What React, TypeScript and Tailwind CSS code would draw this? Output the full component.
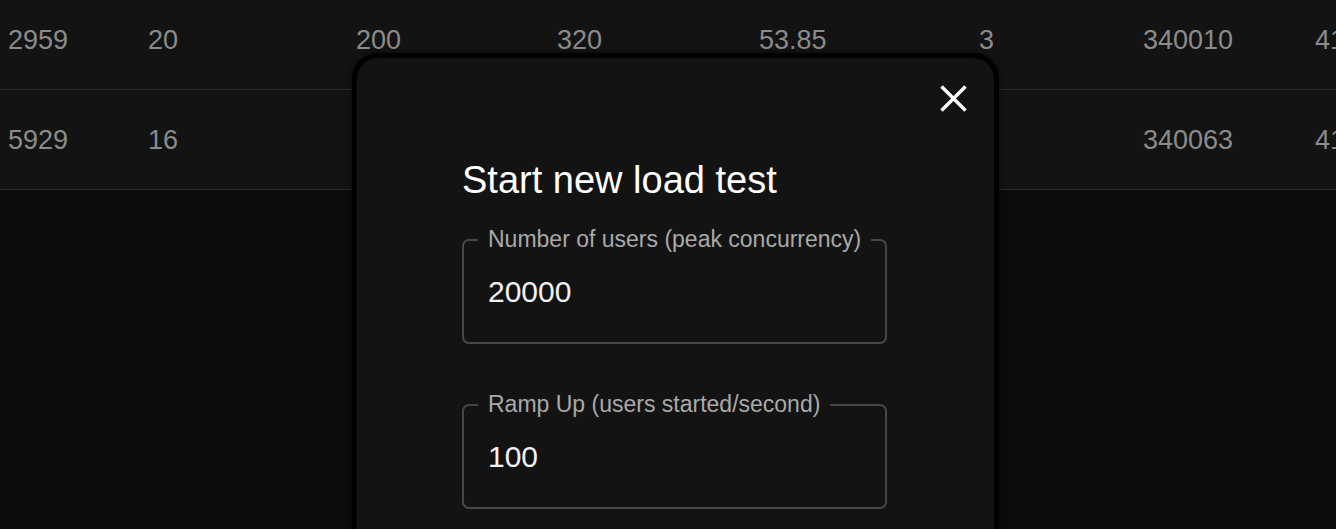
import React from "react";

type Row = string[];

const rows: Row[] = [
  ["2959", "20", "200", "320", "53.85", "3", "340010", "4120"],
  ["5929", "16", "160", "288", "55.56", "2", "340063", "4127"],
];

const CloseIcon: React.FC = () => (
  <svg width="27" height="27" viewBox="0 0 27 27" fill="none" aria-hidden>
    <path d="M1.5 1.5 25.5 25.5M25.5 1.5 1.5 25.5" stroke="white" strokeWidth="3.4" />
  </svg>
);

type FieldProps = {
  label: string;
  value: string;
};

const Field: React.FC<FieldProps> = ({ label, value }) => (
  <fieldset className="rounded-[7px] border-2 border-[#474747] pl-[14px] pr-[4px] pt-[26px] pb-[35px]">
    <legend className="whitespace-nowrap px-2.5 text-[23px] leading-[23px] text-[#a9a9a9]">{label}</legend>
    <div className="pl-2.5 text-[30px] leading-[30px] text-[#f2f2f2]">{value}</div>
  </fieldset>
);

export default function App() {
  return (
    <div
      className="relative h-[529px] w-full overflow-hidden bg-[#0c0c0c]"
      style={{ fontFamily: '"Liberation Sans", Arial, sans-serif' }}
    >
      <div className="-mt-[10px]">
        {rows.map((row, i) => (
          <div
            key={i}
            className="grid h-[100px] grid-cols-[140px_208px_201px_202px_220px_164px_172px_1fr] items-center border-b border-[#2a2a2a] bg-[#131313] pl-2 pt-[2px] text-[27px] text-[#8b8b8b]"
          >
            {row.map((cell, j) => (
              <div key={j} className="whitespace-nowrap">
                {cell}
              </div>
            ))}
          </div>
        ))}
      </div>

      <div className="absolute left-[352px] top-[53px] h-[520px] w-[647px] rounded-[26px] border-[5px] border-black bg-[#131313] shadow-[0_0_6px_rgba(0,0,0,0.6)]">
        <div className="flex justify-end pr-[27px] pt-[27px]">
          <button className="text-white">
            <CloseIcon />
          </button>
        </div>
        <div className="flex flex-col pl-[105px] pr-[107px]">
          <h2 className="mt-[49px] text-[38px] leading-[38px] text-white">Start new load test</h2>
          <div className="mt-[29px] flex flex-col gap-[49px]">
            <Field label="Number of users (peak concurrency)" value="20000" />
            <Field label="Ramp Up (users started/second)" value="100" />
          </div>
        </div>
      </div>
    </div>
  );
}
